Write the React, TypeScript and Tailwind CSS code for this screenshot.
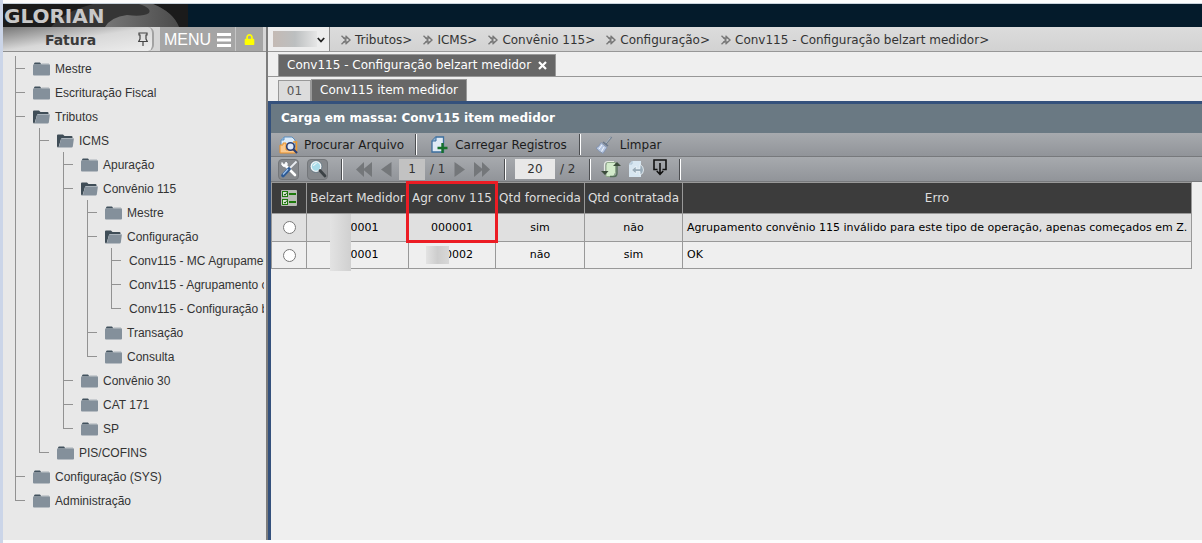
import { useState } from "react";
import { FaLock } from "react-icons/fa";

interface TreeNode {
  label: string;
  leaf?: boolean;
  children?: TreeNode[];
}

interface Registro {
  id: number;
  belzart: string;
  agrupamento: string;
  fornecida: string;
  contratada: string;
  erro: string;
  hideAgr?: boolean;
}

const menu: TreeNode[] = [
  { label: "Mestre" },
  { label: "Escrituração Fiscal" },
  {
    label: "Tributos",
    children: [
      {
        label: "ICMS",
        children: [
          { label: "Apuração" },
          {
            label: "Convênio 115",
            children: [
              { label: "Mestre" },
              {
                label: "Configuração",
                children: [
                  { label: "Conv115 - MC Agrupamento", leaf: true },
                  { label: "Conv115 - Agrupamento convênio", leaf: true },
                  { label: "Conv115 - Configuração belzart medidor", leaf: true },
                ],
              },
              { label: "Transação" },
              { label: "Consulta" },
            ],
          },
          { label: "Convênio 30" },
          { label: "CAT 171" },
          { label: "SP" },
        ],
      },
      { label: "PIS/COFINS" },
    ],
  },
  { label: "Configuração (SYS)" },
  { label: "Administração" },
];

const crumbs = [
  "Tributos",
  "ICMS",
  "Convênio 115",
  "Configuração",
  "Conv115 - Configuração belzart medidor",
];

const registros: Registro[] = [
  {
    id: 1,
    belzart: "000001",
    agrupamento: "000001",
    fornecida: "sim",
    contratada: "não",
    erro: "Agrupamento convênio 115 inválido para este tipo de operação, apenas começados em Z.",
  },
  {
    id: 2,
    belzart: "000001",
    agrupamento: "000002",
    fornecida: "não",
    contratada: "sim",
    erro: "OK",
    hideAgr: true,
  },
];

const Folder = ({ open }: { open?: boolean }) => (
  <svg width="17" height="14" viewBox="0 0 17 14" className="shrink-0">
    {open ? (
      <>
        <path d="M0 1.5Q0 .5 1 .5H6L7.5 2H14.5Q15.5 2 15.5 3V5H4L1.5 13.5Q0 13.5 0 12Z" fill="#3f4d57" />
        <path d="M4.2 4.3H16Q17 4.3 16.8 5.3L15.8 12.6Q15.6 13.6 14.6 13.6H1.8Z" fill="#84909b" />
        <path d="M4.4 4.5H16.4" stroke="#aab3bb" strokeWidth="1" />
      </>
    ) : (
      <>
        <path d="M1 2Q1 .5 2 .5H7L8.5 2.5H1Z" fill="#42525e" />
        <path d="M0 3.5Q0 2.3 1 2.3H16Q17 2.3 17 3.3V12.5Q17 13.6 16 13.6H1Q0 13.6 0 12.5Z" fill="#84909b" />
        <path d="M8.5 2H16" stroke="#a9b1b8" strokeWidth="1" />
      </>
    )}
  </svg>
);

const Tree = ({ nodes }: { nodes: TreeNode[] }) => (
  <ul>
    {nodes.map((node, i) => (
      <li key={node.label} className="flex">
        <div className="flex w-[18px] shrink-0 flex-col">
          <div className="h-[13px] w-[10px] border-b border-l border-[#929292]" />
          {i < nodes.length - 1 && <div className="flex-1 border-l border-[#929292]" />}
        </div>
        <div>
          <a href="#" className="flex h-6 items-center gap-[5px] pt-[2px]">
            {!node.leaf && <Folder open={!!node.children} />}
            <span>{node.label}</span>
          </a>
          {node.children && (
            <div className="pl-[6px]">
              <Tree nodes={node.children} />
            </div>
          )}
        </div>
      </li>
    ))}
  </ul>
);

const Separator = () => <div className="h-[21px] w-[2px] shrink-0 border-l border-[#4c4e51] bg-white" />;

const ArrowLeft = ({ double }: { double?: boolean }) => (
  <svg width={double ? 16 : 11} height="16" viewBox={double ? "0 0 16 16" : "0 0 11 16"}>
    <path d={double ? "M8 1V16L0 8.5ZM16 1V16L7 8.5Z" : "M10.500 1V16L0 8.5Z"} fill="#74777a" />
  </svg>
);

const ArrowRight = ({ double }: { double?: boolean }) => (
  <svg width={double ? 16 : 11} height="16" viewBox={double ? "0 0 16 16" : "0 0 11 16"}>
    <path d={double ? "M0 1V16L9 8.5ZM8 1V16L16 8.5Z" : "M.5 1V16L11 8.5Z"} fill="#74777a" />
  </svg>
);

const SearchFileIcon = () => (
  <svg width="19" height="18" viewBox="0 0 19 18">
    <path d="M5 1H13L16 4V11H2V4Z" fill="#dcebf8" stroke="#5b8dbd" />
    <path d="M2 4H5V1" fill="#9fc3e4" stroke="#5b8dbd" />
    <path d="M1 9H4V7H7V14H17V17H1Z" fill="#f9c98f" stroke="#e9902a" />
    <path d="M14 6H17.500V16" fill="none" stroke="#f09a2e" strokeWidth="1.500" />
    <circle cx="11.500" cy="10.500" r="3.800" fill="#dfeafa" stroke="#2c3f73" strokeWidth="1.600" />
    <path d="M14.300 13.300L18 17" stroke="#2c3f73" strokeWidth="2.200" />
  </svg>
);

const AddFileIcon = () => (
  <svg width="17" height="18" viewBox="0 0 17 18">
    <path d="M5 1H12.500V16H1V5Z" fill="#dfeaf5" stroke="#3c6f9e" strokeWidth="1.300" />
    <path d="M1 5H5V1" fill="#8fb4d4" stroke="#3c6f9e" />
    <path d="M11.500 7V17M6.500 12H16.500" stroke="#16702a" strokeWidth="2.400" />
  </svg>
);

const BroomIcon = () => (
  <svg width="18" height="18" viewBox="0 0 18 18">
    <path d="M16.500 1L10.500 8" stroke="#6f7d8c" strokeWidth="1.800" />
    <path d="M15.500 1.500L10 8" stroke="#d5dde6" strokeWidth=".7" />
    <path d="M6 6.500L12 11.500L8 17.500Q3 15 1 12Q4 11 6 6.500Z" fill="#b7c7e2" stroke="#8595b0" />
    <path d="M8 6L13 10" stroke="#66758a" strokeWidth="1.600" />
    <path d="M7 9L4 13M9 11L6.500 15.500" stroke="#f2f6fc" />
  </svg>
);

const ToolsIcon = () => (
  <svg width="18" height="18" viewBox="0 0 18 18">
    <path d="M5 5L15 15" stroke="#fff" strokeWidth="2.600" strokeLinecap="round" />
    <path d="M2 2.500Q1 5.500 3.500 6.500T7 5.500 6 2L5 4.500 3 4.200Z" fill="#fff" stroke="#f4f6f8" />
    <path d="M16.500 1.500L9 9" stroke="#e9edf2" strokeWidth="1.800" />
    <path d="M9 9L3 15.500" stroke="#2d5a94" strokeWidth="3.600" strokeLinecap="round" />
    <path d="M8 9L3 14.500" stroke="#9cc1ec" strokeWidth="1.200" />
  </svg>
);

const MagnifierIcon = () => (
  <svg width="18" height="18" viewBox="0 0 18 18">
    <circle cx="7" cy="6.500" r="5" fill="#a9dcea" stroke="#f3f6f8" strokeWidth="1.600" />
    <circle cx="7" cy="6.500" r="5.900" fill="none" stroke="#4f6b7c" strokeWidth=".6" />
    <path d="M4.500 6Q5 3.800 7.500 3.500" stroke="#fff" fill="none" />
    <path d="M11 10.500L16 16" stroke="#3c4246" strokeWidth="2.800" strokeLinecap="round" />
  </svg>
);

const RefreshIcon = () => (
  <svg width="20" height="18" viewBox="0 0 20 18">
    <path d="M6 2.500H14.500V12.500L12.500 16.500H5V5Z" fill="#d3ebcb" stroke="#8fa98a" />
    <path d="M3.500 11V5Q3.500 1.500 7 1.500H13" fill="none" stroke="#e6ebe4" strokeWidth="1.200" />
    <path d="M0 11H7.500L4 15Z" fill="#3c4c3c" />
    <path d="M12 6H20L16 2Z" fill="#3c4c3c" />
    <path d="M16 6V13Q16 16.500 13 16.500H9" fill="none" stroke="#56705a" strokeWidth="1.400" />
  </svg>
);

const ExportIcon = () => (
  <svg width="17" height="18" viewBox="0 0 17 18">
    <path d="M4 1H13V17H1V4Z" fill="#d7e6f1" />
    <path d="M1 4H4V1" fill="none" stroke="#a9bfd0" />
    <path d="M3.500 10L8 6V8.700H12V4.500Q15.500 6 15.500 10T12 15V11.500H8V14Z" fill="#9aacb9" stroke="#eef5fa" strokeWidth=".8" />
  </svg>
);

const DownloadIcon = () => (
  <svg width="14" height="17" viewBox="0 0 14 17" fill="none" stroke="#111" strokeWidth="1.600">
    <path d="M4.500 10.500H1V1H13V10.500H9.500" />
    <path d="M7 4V15M3.800 12L7 15.300L10.200 12" />
  </svg>
);

const ChecklistIcon = () => (
  <svg width="16" height="16" viewBox="0 0 16 16">
    <rect width="16" height="16" rx="1" fill="#b9bcb6" />
    <rect x="1.500" y="1.500" width="5" height="5" fill="#d7e8d0" stroke="#1e7a0c" />
    <rect x="1.500" y="9.500" width="5" height="5" fill="#d7e8d0" stroke="#1e7a0c" />
    <path d="M3 4L4 5.200L6 2.500M3 12L4 13.200L6 10.500" stroke="#1e5a12" fill="none" />
    <path d="M8 4H15M8 12H15" stroke="#1e7a0c" strokeWidth="2" />
  </svg>
);

const App = () => {
  const [selected, setSelected] = useState<number | null>(null);
  const [page, setPage] = useState("1");
  const [size, setSize] = useState("20");

  return (
    <div className="flex min-h-screen flex-col border-l-[3px] border-[#cbd5e8] bg-[#fcfcfc] pb-[3px] font-['DejaVu_Sans',Verdana,sans-serif] text-[12px] leading-4 text-[#333]">
      <header className="mt-[3px] flex h-6 border-t border-[#c9d3dc] bg-[#041b2b]">
        <div className="relative w-[185px] overflow-hidden bg-[#1b1b1b]">
          <svg width="185" height="23" viewBox="0 0 185 23" className="absolute top-0 left-0">
            <defs>
              <linearGradient id="swirl" x1="0" x2="1">
                <stop offset="0" stopColor="#777" />
                <stop offset="1" stopColor="#4b4b4b" />
              </linearGradient>
            </defs>
            <path d="M48 23Q62 7 90 0H150Q170 8 176 23Z" fill="#353535" />
            <path d="M102 23Q108 13 124 11Q140 13 146 9Q149 4 136 0H150Q170 8 176 23Z" fill="url(#swirl)" />
          </svg>
          <span className="relative block pt-px pl-px text-[20px] leading-[23px] font-bold text-[#c8c8c8]">GLORIAN</span>
        </div>
      </header>

      <div className="flex flex-1">
        <aside className="flex w-[265px] shrink-0 flex-col border-r-2 border-[#7d7d7d] bg-[#e8e8e8]">
          <div className="flex h-[25px] border-b border-[#8e8e8e] bg-[#d6d6d6]">
            <div className="flex w-[151px] items-center rounded-r-md border-r-2 border-[#a2a2a2] bg-linear-to-br from-[#777] via-[#d8d8d8] to-[#eee]">
              <span className="flex-1 pt-px text-center text-[14px] font-bold text-[#3a3a3a]">Fatura</span>
              <button aria-label="Fixar menu" className="w-[14px]">
                <svg width="10" height="15" viewBox="0 0 10 15" fill="none" stroke="#444" strokeWidth="1.200">
                  <path d="M1 1H9V3H8V7L9.300 9.500H.7L2 7V3H1ZM5 9.500V14" />
                </svg>
              </button>
            </div>
            <button className="ml-[6px] flex w-[75px] items-center justify-center gap-[6px] bg-[#a5a5a5] pt-px font-['Liberation_Sans',Arial,sans-serif] text-[16px] text-white">
              MENU
              <svg width="14" height="14" viewBox="0 0 14 14">
                <path d="M0 1.500H14M0 7H14M0 12.500H14" stroke="#fff" strokeWidth="3" />
              </svg>
            </button>
            <button aria-label="Bloquear" className="flex w-[28px] items-center justify-center border-l border-[#c4c4c4] bg-[#a5a5a5]">
              <FaLock size={11} color="#ffff00" />
            </button>
          </div>
          <nav className="mr-[2px] flex-1 overflow-hidden pt-1 pl-3 font-['Liberation_Sans',Arial,sans-serif] whitespace-nowrap text-[#333]">
            <Tree nodes={menu} />
          </nav>
        </aside>

        <main className="flex min-w-0 flex-1 flex-col bg-[#efefef]">
          <div className="flex h-[25px] border-b border-[#979797] bg-linear-to-b from-[#dcdcdc] to-[#d2d2d2]">
            <div className="relative w-[62px] border-r border-[#8a8a8a] bg-[#ededed]">
              <select aria-label="Empresa" className="h-full w-full appearance-none bg-transparent">
                <option></option>
              </select>
              <div className="pointer-events-none absolute top-1 left-[5px] h-4 w-11 bg-linear-to-r from-[#c4bab4] via-[#bcbfc0] to-[#e6e6e6]" />
              <svg width="8" height="6" viewBox="0 0 8 6" className="pointer-events-none absolute top-[10px] right-[4px]">
                <path d="M.8 1L4 4.500L7.200 1" fill="none" stroke="#222" strokeWidth="1.800" />
              </svg>
            </div>
            <nav className="flex items-center gap-[11px] pt-px pl-[11px] whitespace-nowrap">
              {crumbs.map((crumb) => (
                <a key={crumb} href="#" className="flex items-center gap-1">
                  <svg width="10" height="10" viewBox="0 0 10 10" fill="none" stroke="#777" strokeWidth="1.400">
                    <path d="M.5 .7L5 5L.5 9.300M4.500 .7L9 5L4.500 9.300M2 3L7 3M2 7L7 7" />
                  </svg>
                  {crumb}&gt;
                </a>
              ))}
            </nav>
          </div>

          <div className="flex h-[25px] items-end border-b border-[#979797] pl-[10px]">
            <div className="flex h-[22px] items-center gap-[7px] border border-b-0 border-[#999] bg-[#676767] px-2 pb-px text-white">
              Conv115 - Configuração belzart medidor
              <button aria-label="Fechar aba">
                <svg width="9" height="9" viewBox="0 0 9 9">
                  <path d="M1 1L8 8M8 1L1 8" stroke="#fff" strokeWidth="2.200" />
                </svg>
              </button>
            </div>
          </div>
          <div className="flex h-6 items-end pl-[10px]">
            <button className="h-[21px] w-[33px] border border-b-0 border-[#999] bg-[#dcdcdc] text-[#555]">01</button>
            <button className="h-[22px] border border-b-0 border-[#999] bg-[#676767] px-2 pb-[2px] text-white">Conv115 item medidor</button>
          </div>

          <section className="flex flex-1 flex-col border-t-[3px] border-l-[3px] border-[#34517c]">
            <h1 className="h-[29px] bg-[#6a7983] pl-[10px] leading-[29px] font-bold text-white">
              Carga em massa: Conv115 item medidor
            </h1>
            <div className="flex h-6 items-center border-b border-[#77797c] bg-linear-to-b from-[#a7aaae] to-[#919499] pl-2 text-[#1c1c1c]">
              <button className="flex items-center gap-[6px] pr-[11px]">
                <SearchFileIcon />
                Procurar Arquivo
              </button>
              <Separator />
              <button className="flex items-center gap-[7px] pr-3 pl-[14px]">
                <AddFileIcon />
                Carregar Registros
              </button>
              <Separator />
              <button className="flex items-center gap-[7px] pl-[14px]">
                <BroomIcon />
                Limpar
              </button>
            </div>
            <div className="flex h-[25px] items-center border-b border-[#77797c] bg-linear-to-b from-[#a7aaae] to-[#919499] pl-[7px]">
              <button aria-label="Ferramentas" className="flex h-[21px] w-[21px] items-center justify-center rounded-sm border border-[#73767a] bg-[#85888c]">
                <ToolsIcon />
              </button>
              <button aria-label="Pesquisar" className="mr-[13px] ml-2 flex h-[21px] w-[21px] items-center justify-center rounded-sm border border-[#73767a] bg-[#85888c]">
                <MagnifierIcon />
              </button>
              <Separator />
              <button aria-label="Primeira página" className="ml-[13px]">
                <ArrowLeft double />
              </button>
              <button aria-label="Página anterior" className="mr-[7px] ml-[9px]">
                <ArrowLeft />
              </button>
              <input
                aria-label="Página"
                className="h-[21px] w-[26px] bg-[#c2c2c2] text-center"
                value={page}
                onChange={(e) => setPage(e.target.value)}
              />
              <span className="w-[29px] pl-[5px] whitespace-nowrap">/ 1</span>
              <button aria-label="Próxima página">
                <ArrowRight />
              </button>
              <button aria-label="Última página" className="mr-[14px] ml-[9px]">
                <ArrowRight double />
              </button>
              <Separator />
              <input
                aria-label="Registros por página"
                className="mr-[5px] ml-[9px] h-5 w-10 bg-[#e8e8e8] text-center"
                value={size}
                onChange={(e) => setSize(e.target.value)}
              />
              <span className="w-[29px] whitespace-nowrap">/ 2</span>
              <Separator />
              <button aria-label="Atualizar" className="ml-[10px]">
                <RefreshIcon />
              </button>
              <button aria-label="Exportar" className="ml-[7px]">
                <ExportIcon />
              </button>
              <button aria-label="Baixar" className="mr-[12px] ml-2 pb-[4px]">
                <DownloadIcon />
              </button>
              <Separator />
            </div>

            <table className="w-[921px] table-fixed border-collapse text-[11px] text-black">
              <thead>
                <tr className="h-[31px] bg-[#3c3c3c] text-[12px] whitespace-nowrap text-[#dedede]">
                  <th className="w-[35px] border border-[#999]">
                    <div className="flex justify-center">
                      <ChecklistIcon />
                    </div>
                  </th>
                  <th className="w-[102px] border border-[#999] font-normal">Belzart Medidor</th>
                  <th className="relative w-[87px] border border-[#999] font-normal">
                    Agr conv 115
                    <div className="pointer-events-none absolute -top-[2px] -left-[3px] h-[62px] w-[92px] border-[3px] border-[#ec1c24]" />
                  </th>
                  <th className="w-[89px] border border-[#999] font-normal">Qtd fornecida</th>
                  <th className="w-[98px] border border-[#999] font-normal">Qtd contratada</th>
                  <th className="border border-[#999] font-normal">Erro</th>
                </tr>
              </thead>
              <tbody>
                {registros.map((r) => (
                  <tr key={r.id} className="h-7 text-center odd:bg-[#e0e0e0] even:h-[27px] even:bg-[#efefef]">
                    <td className="border border-[#999]">
                      <input
                        type="radio"
                        name="registro"
                        aria-label={`Registro ${r.id}`}
                        className="mx-auto block h-[13px] w-[13px]"
                        checked={selected === r.id}
                        onChange={() => setSelected(r.id)}
                      />
                    </td>
                    <td className="relative border border-[#999]">
                      {r.belzart}
                      <div className="absolute top-0 left-[23px] h-[29px] w-[21px] bg-linear-to-r from-[#e3e3e3] to-[#d0d0d0]" />
                    </td>
                    <td className="relative border border-[#999]">
                      {r.agrupamento}
                      {r.hideAgr && (
                        <div className="absolute top-1 left-[17px] h-[18px] w-[23px] bg-linear-to-r from-[#e3e3e3] via-[#cdcdcd] to-[#d8d8d8]" />
                      )}
                    </td>
                    <td className="border border-[#999]">{r.fornecida}</td>
                    <td className="border border-[#999]">{r.contratada}</td>
                    <td className="border border-[#999] pl-1 text-left whitespace-nowrap">{r.erro}</td>
                  </tr>
                ))}
              </tbody>
            </table>
          </section>
        </main>
      </div>
    </div>
  );
};

export default App;
